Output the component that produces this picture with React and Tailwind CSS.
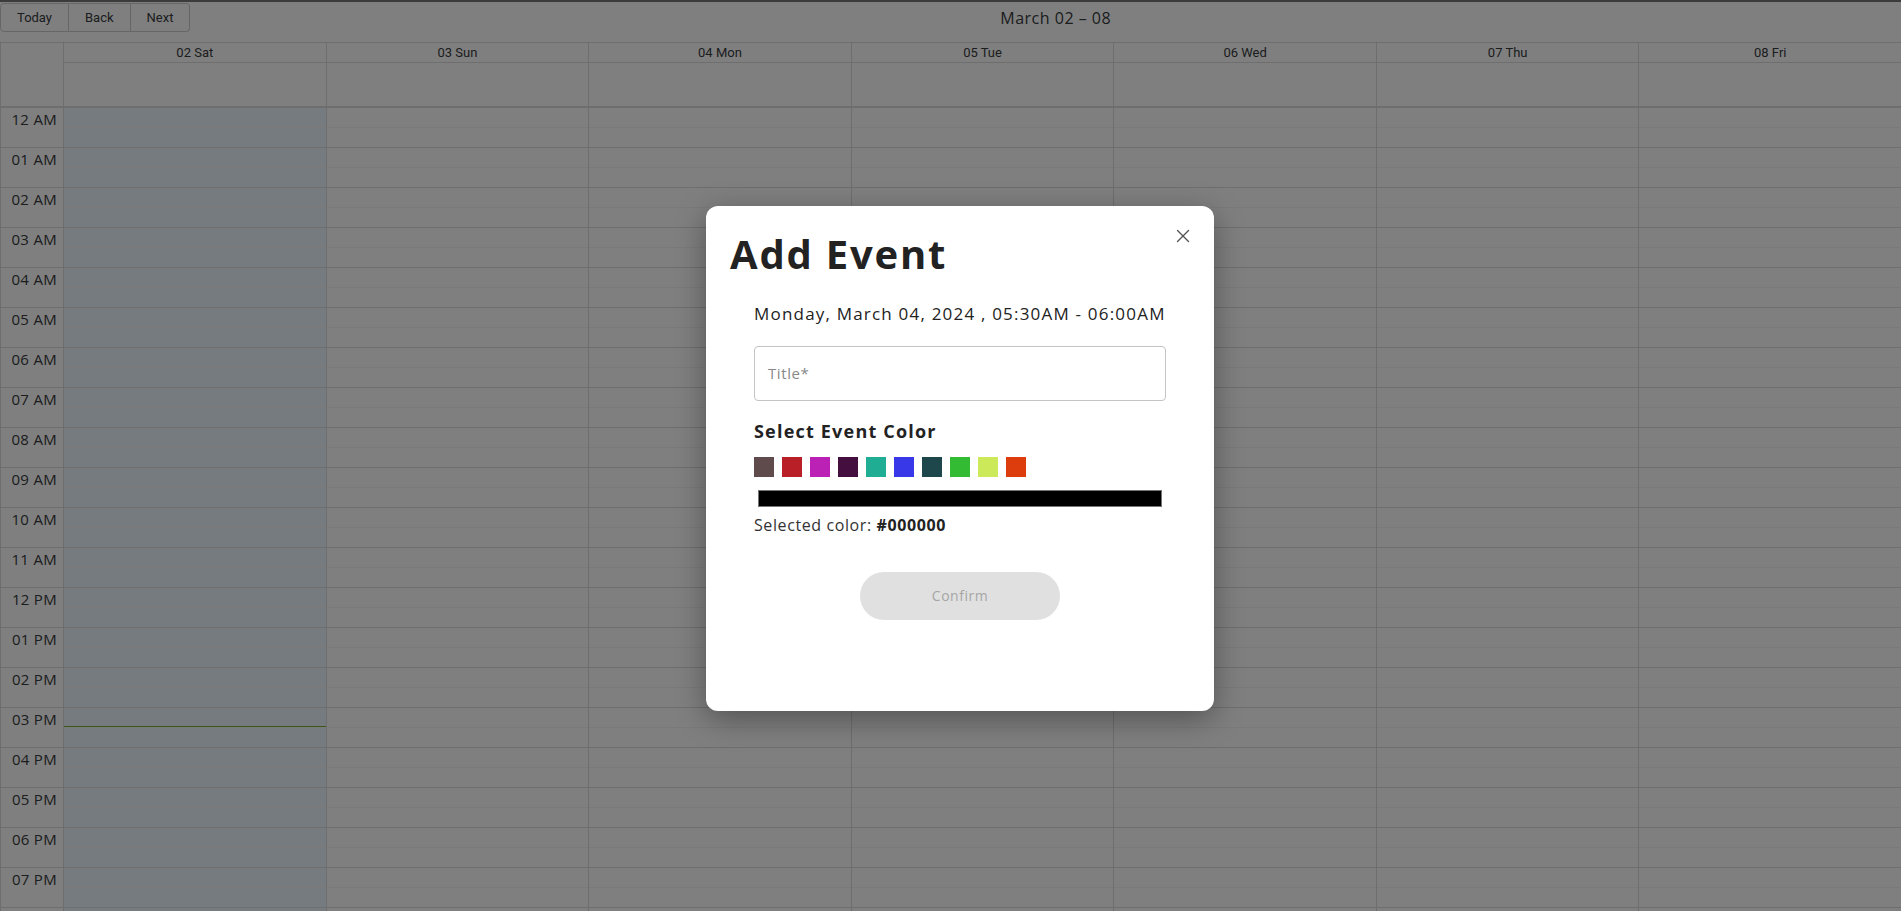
import { X } from 'lucide-react';

const DAYS = ['02 Sat', '03 Sun', '04 Mon', '05 Tue', '06 Wed', '07 Thu', '08 Fri'];
// only the rows that fit on screen; the last one shows no label
const HOURS = [
  '12 AM', '01 AM', '02 AM', '03 AM', '04 AM', '05 AM', '06 AM', '07 AM', '08 AM', '09 AM', '10 AM', '11 AM',
  '12 PM', '01 PM', '02 PM', '03 PM', '04 PM', '05 PM', '06 PM', '07 PM', '',
];
const SWATCHES = ['#5f4b4b', '#b91f26', '#bb21b5', '#440e3f', '#1fad94', '#3838e8', '#1d474b', '#33bb33', '#cbe958', '#dd3d0c'];

const mont = "font-['Open_Sans','Noto_Sans',sans-serif]";
const rob = "font-['Roboto','Liberation_Sans',sans-serif]";

function DayColumn({ today }) {
  return (
    <div className={`relative flex-1 border-l border-[#ddd] ${today ? 'bg-[#eaf6ff]' : ''}`}>
      {HOURS.map((h, i) => (
        <div key={i} className="h-[40px] border-b border-[#ddd] flex flex-col">
          <div className="h-[20px] border-b border-[#f4f4f4]" />
        </div>
      ))}
      {today && <div className="absolute left-0 right-0 top-[618px] h-px bg-[#74ad31]" />}
    </div>
  );
}

function Calendar() {
  return (
    <div className="h-[911px] overflow-hidden bg-white border-t-2 border-[#777]">
      {/* toolbar */}
      <div className="relative flex items-center h-[40px] pb-[10px] pt-[1px]">
        <div className={`flex text-[13px] text-[#373a3c] ${rob}`}>
          <button className="h-[29px] px-[16px] border border-[#ccc] rounded-l-[4px]">Today</button>
          <button className="h-[29px] px-[16px] border border-l-0 border-[#ccc]">Back</button>
          <button className="h-[29px] px-[16px] border border-l-0 border-[#ccc] rounded-r-[4px]">Next</button>
        </div>
        <div className={`flex-1 pl-[20px] text-center text-[16px] tracking-[0.5px] text-[#373a3c] ${mont}`}>March 02 – 08</div>
      </div>

      {/* header */}
      <div className="flex border-l border-t border-[#ddd] h-[66px] border-b-2 border-b-[#ddd]">
        <div className="w-[62px] shrink-0" />
        {DAYS.map(d => (
          <div key={d} className="flex-1 border-l border-[#ddd] flex flex-col">
            <div className={`h-[20px] border-b border-[#ddd] text-center text-[13px] leading-[20px] text-[#373a3c] ${rob}`}>{d}</div>
            <div className="flex-1" />
          </div>
        ))}
      </div>

      {/* body */}
      <div className="flex border-l border-[#ddd]">
        <div className="w-[62px] shrink-0">
          {HOURS.map((h, i) => (
            <div key={i} className={`h-[40px] border-b border-[#ddd] text-right pr-[6px] pt-[0px] text-[15px] tracking-[0.3px] text-[#373a3c] ${mont}`}>
              {h}
            </div>
          ))}
        </div>
        {DAYS.map((d, i) => <DayColumn key={d} today={i === 0} />)}
      </div>
    </div>
  );
}

function AddEventModal() {
  return (
    <div className={`absolute left-[706px] top-[206px] w-[508px] h-[505px] bg-white rounded-[12px] shadow-[0_8px_30px_rgba(0,0,0,0.35)] ${mont}`}>
      <button className="absolute right-[20px] top-[19px] text-[#555]">
        <X size={22} strokeWidth={1.5} />
      </button>
      <h2 className="pl-[24px] pt-[20px] text-[40px] font-bold leading-[56px] tracking-[1.8px] text-[#222]">Add Event</h2>
      <div className="px-[48px]">
        <p className="mt-[19px] text-[17px] tracking-[1.2px] text-[#222]">Monday, March 04, 2024 , 05:30AM - 06:00AM</p>
        <div className="mt-[19px] h-[55px] border border-[#c4c4c4] rounded-[4px] flex items-center px-[13px] text-[15px] tracking-[0.6px] text-[#888]">
          Title*
        </div>
        <h3 className="mt-[17px] text-[18px] font-bold tracking-[1.2px] text-[#222]">Select Event Color</h3>
        <div className="mt-[12px] flex gap-[8px]">
          {SWATCHES.map(c => (
            <div key={c} className="w-[20px] h-[20px]" style={{ backgroundColor: c }} />
          ))}
        </div>
        <div className="mt-[13px] mx-[4px] w-[404px] h-[17px] bg-black border border-[#767676]" />
        <p className="mt-[6px] text-[16px] tracking-[0.6px] text-[#333]">
          Selected color: <span className="font-bold text-[#222]">#000000</span>
        </p>
        <div className="mt-[35px] flex justify-center">
          <button className="w-[200px] h-[48px] rounded-full bg-[#e0e0e0] text-[14px] tracking-[0.5px] text-[#a6a6a6]">Confirm</button>
        </div>
      </div>
    </div>
  );
}

export default function App() {
  return (
    <div className="relative w-[1901px] h-[911px] overflow-hidden">
      <Calendar />
      <div className="absolute inset-0 bg-black/50" />
      <AddEventModal />
    </div>
  );
}
